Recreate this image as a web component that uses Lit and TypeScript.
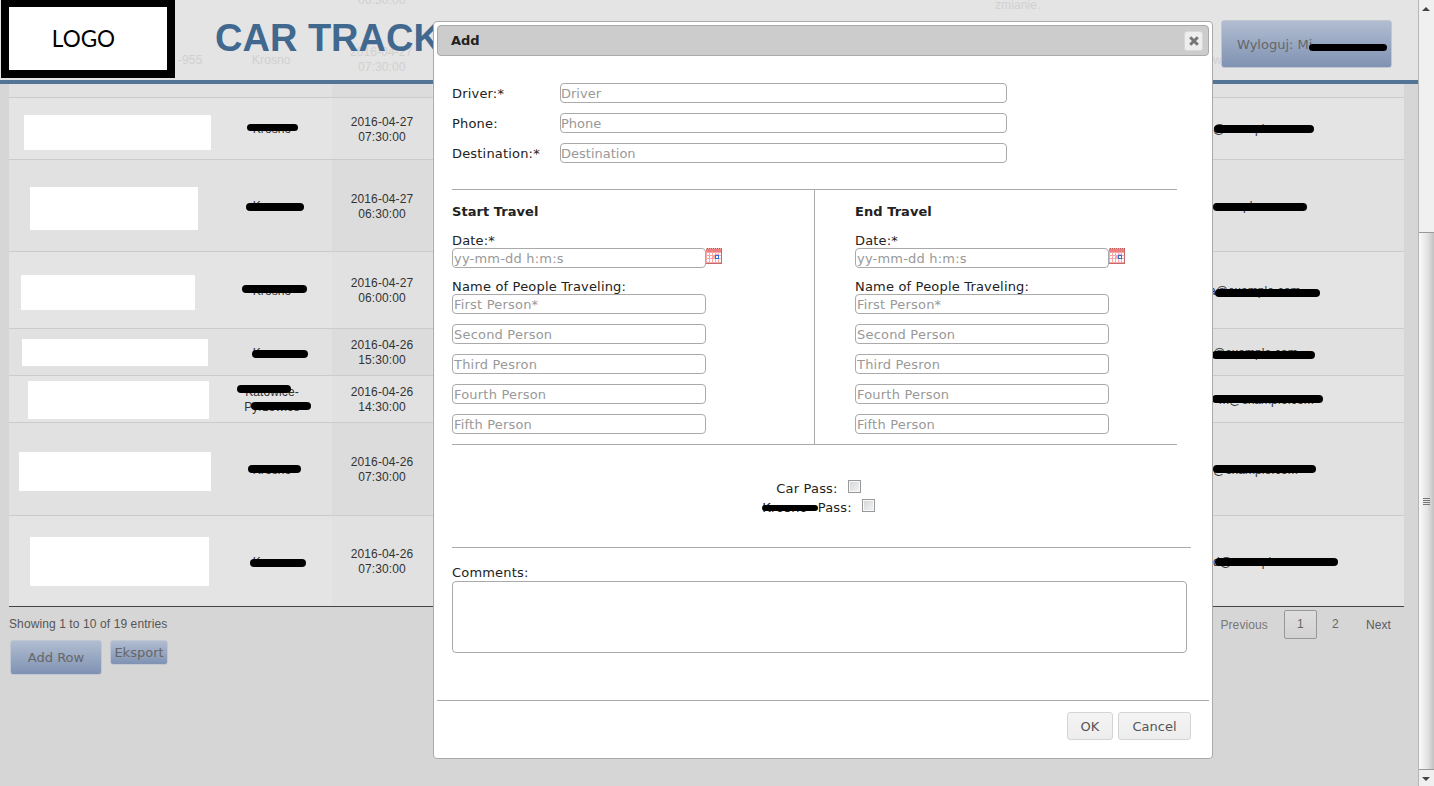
import { LitElement, css, html, nothing, svg } from "lit";
import { customElement } from "lit/decorators.js";

type Box = [x: number, y: number, w: number, h: number];

type TableRow = {
  height: number;
  date?: string;
  time?: string;
  city?: string[];
  email?: string;
  emailOffset?: number;
  white?: Box;
  marks?: Box[];
};

// boxes and marks are in page coordinates, the render turns them into row offsets
const ROWS: TableRow[] = [
  { height: 14 },
  {
    height: 62, date: "2016-04-27", time: "07:30:00", city: ["Krosno"], email: "@example.com", emailOffset: 0,
    white: [24, 115, 187, 35],
    marks: [[247, 124, 51, 7], [1214, 125, 100, 8]],
  },
  {
    height: 92, date: "2016-04-27", time: "06:30:00", city: ["Krosno"], email: "@example.com", emailOffset: -12,
    white: [30, 187, 168, 43],
    marks: [[246, 203, 58, 8], [1213, 203, 94, 8]],
  },
  {
    height: 77, date: "2016-04-27", time: "06:00:00", city: ["Krosno"], email: "a@example.com", emailOffset: -4,
    white: [21, 275, 174, 35],
    marks: [[242, 285, 65, 8], [1215, 289, 105, 8]],
  },
  {
    height: 47, date: "2016-04-26", time: "15:30:00", city: ["Krosno"], email: "@example.com", emailOffset: 0,
    white: [22, 339, 186, 27],
    marks: [[252, 350, 56, 8], [1212, 351, 103, 8]],
  },
  {
    height: 47, date: "2016-04-26", time: "14:30:00", city: ["Katowice-", "Pyrzowice"], email: "m@example.com", emailOffset: 6,
    white: [28, 381, 181, 38],
    marks: [[237, 385, 54, 8], [251, 402, 60, 8], [1212, 395, 111, 8]],
  },
  {
    height: 93, date: "2016-04-26", time: "07:30:00", city: ["Krosno"], email: "@example.com", emailOffset: 0,
    white: [19, 452, 192, 39],
    marks: [[248, 465, 53, 8], [1213, 465, 103, 8]],
  },
  {
    height: 91, date: "2016-04-26", time: "07:30:00", city: ["Krosno"], email: "d@example.com", emailOffset: 0,
    white: [30, 537, 179, 49],
    marks: [[250, 559, 56, 8], [1215, 558, 123, 8]],
  },
];

const GHOSTS: Array<[text: string, x: number, y: number]> = [
  ["06:30:00", 358, -7],
  ["-955", 178, 53],
  ["Krosno", 252, 53],
  ["2016-04-27", 350, 45],
  ["07:30:00", 358, 60],
  ["zmianie.", 995, -2],
  ["w", 1213, 53],
];

const PEOPLE = ["First Person*", "Second Person", "Third Pesron", "Fourth Person", "Fifth Person"];

const calendarIcon = svg`
  <svg class="cal" width="16" height="16" viewBox="0 0 16 16" shape-rendering="crispEdges">
    <rect x="0" y="0" width="16" height="1" fill="#e8b4b4" />
    <path d="M1 0h1v1H1zM3 0h1v1H3zM5 0h1v1H5zM7 0h1v1H7zM9 0h1v1H9zM11 0h1v1h-1zM13 0h1v1h-1zM15 0h1v1h-1z" fill="#b05a5a" />
    <rect x="0" y="1" width="16" height="3" fill="#ee7f7f" />
    <rect x="0" y="4" width="16" height="11" fill="#f7a8a8" />
    <rect x="0" y="15" width="16" height="1" fill="#c46a6a" />
    <rect x="15" y="1" width="1" height="15" fill="#c46a6a" />
    <path d="M1 5h2v2H1zM4 5h2v2H4zM7 5h2v2H7zM10 5h2v1h-2zM13 5h2v2h-2zM1 8h2v2H1zM4 8h2v2H4zM1 11h2v3H1zM4 11h2v3H4zM7 11h2v3H7zM10 11h2v3h-2zM13 11h2v3h-2zM13 8h2v2h-2z" fill="#fff" />
    <rect x="9" y="7" width="4" height="4" fill="#2f6fe0" />
    <rect x="10" y="8" width="2" height="2" fill="#fff" />
  </svg>
`;

@customElement("app-root")
export class AppRoot extends LitElement {
  private _renderRow(row: TableRow, top: number, index: number) {
    return html`
      <div class="row ${index % 2 === 0 ? "even" : "odd"}" style="height:${row.height}px">
        <div></div>
        <div class="cell">${row.city?.map((line) => html`<div>${line}</div>`) ?? nothing}</div>
        <div class="cell sorted">
          ${row.date ? html`<div>${row.date}</div><div>${row.time}</div>` : nothing}
        </div>
        <div></div>
        <div class="cell email">
          ${row.email ? html`<span style="margin-left:${row.emailOffset}px">${row.email}</span>` : nothing}
        </div>
        ${row.white ? this._renderBox("white-box", row.white, top) : nothing}
        ${row.marks?.map((mark) => this._renderBox("mark", mark, top)) ?? nothing}
      </div>
    `;
  }

  private _renderBox(cls: string, [x, y, w, h]: Box, top: number) {
    return html`<div class=${cls} style="left:${x - 9}px;top:${y - top}px;width:${w}px;height:${h}px"></div>`;
  }

  private _renderTravel(title: string) {
    return html`
      <div class="travel">
        <div class="travel-title">${title}</div>
        <div class="label">Date:*</div>
        <div class="date-row">
          <input class="text short" placeholder="yy-mm-dd h:m:s" />
          ${calendarIcon}
        </div>
        <div class="label people">Name of People Traveling:</div>
        <div class="person-list">
          ${PEOPLE.map((p) => html`<input class="text short" placeholder=${p} />`)}
        </div>
      </div>
    `;
  }

  protected render() {
    let top = 84;
    return html`
      <div class="page">
        <header>
          ${GHOSTS.map(([text, x, y]) => html`<span class="ghost" style="left:${x}px;top:${y}px">${text}</span>`)}
          <div class="logo"><span>LOGO</span></div>
          <h1>CAR TRACKER</h1>
          <button class="blue logout">
            Wyloguj: Mi<span class="logout-mark"></span>
          </button>
        </header>
        <div class="table">
          ${ROWS.map((row, i) => {
            const el = this._renderRow(row, top, i);
            top += row.height;
            return el;
          })}
        </div>
        <div class="below">
          <div>
            <div class="info">Showing 1 to 10 of 19 entries</div>
            <div class="actions">
              <button class="blue add">Add Row</button>
              <button class="blue export">Eksport</button>
            </div>
          </div>
          <div class="paging">
            <span class="prev">Previous</span>
            <span class="page-no current">1</span>
            <span class="page-no">2</span>
            <span class="next">Next</span>
          </div>
        </div>
      </div>

      <div class="scrollbar">
        <svg class="arrow" width="16" height="17" viewBox="0 0 16 17"><path d="M4 11l4-4 4 4z" fill="#444" /></svg>
        <div class="track">
          <div class="thumb">
            <svg width="8" height="8" viewBox="0 0 8 8" shape-rendering="crispEdges">
              <path d="M0 1h7M0 3h7M0 5h7M0 7h7" stroke="#777" stroke-width="1" />
            </svg>
          </div>
        </div>
        <svg class="arrow" width="16" height="16" viewBox="0 0 16 16"><path d="M4 7l4 4 4-4z" fill="#444" /></svg>
      </div>

      <div class="dialog">
        <div class="titlebar">
          <span>Add</span>
          <button class="close">
            <svg width="12" height="12" viewBox="0 0 12 12">
              <path d="M2.2 2.2l7.6 7.6M9.8 2.2l-7.6 7.6" stroke="#777" stroke-width="3" fill="none" />
            </svg>
          </button>
        </div>
        <div class="body">
          <div class="fields">
            <div class="label">Driver:*</div><input class="text" placeholder="Driver" />
            <div class="label">Phone:</div><input class="text" placeholder="Phone" />
            <div class="label">Destination:*</div><input class="text" placeholder="Destination" />
          </div>
          <div class="travels">
            ${this._renderTravel("Start Travel")}
            ${this._renderTravel("End Travel")}
          </div>
          <div class="passes">
            <label>Car Pass: <input type="checkbox" /></label>
            <label><span class="pass-name">Krosno<span class="pass-mark"></span></span> Pass: <input type="checkbox" /></label>
          </div>
          <div class="comments">
            <div class="label">Comments:</div>
            <textarea></textarea>
          </div>
        </div>
        <div class="footer">
          <button class="plain ok">OK</button>
          <button class="plain cancel">Cancel</button>
        </div>
      </div>
    `;
  }

  static styles = css`
    :host {
      display: flex;
      position: relative;
      width: 1434px;
      height: 786px;
      overflow: hidden;
      background: #d6d6d6;
      font-family: "Liberation Sans", Arial, sans-serif;
      font-size: 12px;
      letter-spacing: 0.1px;
      color: #333;
    }

    .page {
      width: 1418px;
      flex: none;
    }

    header {
      position: relative;
      display: flex;
      align-items: flex-start;
      height: 80px;
      background: #e4e4e4;
      border-bottom: 4px solid #527596;
      overflow: hidden;
    }

    .ghost {
      position: absolute;
      line-height: 15px;
      color: #d0d0d0;
    }

    .logo {
      position: relative;
      box-sizing: border-box;
      display: flex;
      align-items: center;
      justify-content: center;
      width: 174px;
      height: 78px;
      margin-left: 1px;
      padding-right: 9px;
      border: solid #000;
      border-width: 7px 8px 8px 8px;
      background: #fff;
      font-family: Lato, sans-serif;
      font-size: 22.5px;
      letter-spacing: 0;
      color: #000;
    }

    h1 {
      position: relative;
      margin: 16px 0 0 40px;
      font-size: 38px;
      line-height: 44px;
      font-weight: bold;
      letter-spacing: 0;
      color: #41688f;
      white-space: nowrap;
    }

    button {
      font-family: "DejaVu Sans", Verdana, sans-serif;
      font-size: 13px;
      padding: 0;
      cursor: pointer;
    }

    .blue {
      box-sizing: border-box;
      border: 1px solid #c0c7d2;
      border-radius: 3px;
      background: linear-gradient(#b1bdd1, #7f92b3);
      color: #666;
      position: relative;
    }

    .logout {
      position: absolute;
      left: 1221px;
      top: 20px;
      width: 171px;
      height: 48px;
      padding-left: 15px;
      text-align: left;
      white-space: nowrap;
    }

    .logout-mark {
      position: absolute;
      left: 87px;
      top: 23px;
      width: 78px;
      height: 7px;
      border-radius: 4px;
      background: #000;
    }

    .table {
      margin: 0 14px 0 9px;
    }

    .row {
      position: relative;
      box-sizing: border-box;
      display: grid;
      grid-template-columns: 203px 120px 100px 1fr 191px;
      border-bottom: 1px solid #cbcbcb;
      overflow: visible;
    }

    .row:last-child {
      border-bottom-color: #444;
    }

    .row.even {
      background: #e1e1e1;
    }

    .row.odd {
      background: #e4e4e4;
    }

    .cell {
      box-sizing: border-box;
      display: flex;
      flex-direction: column;
      align-items: center;
      justify-content: center;
      padding-top: 2px;
      line-height: 15px;
      text-align: center;
      color: #333;
    }

    .row.even .sorted {
      background: #dcdcdc;
    }

    .row.odd .sorted {
      background: #e1e1e1;
    }

    .email {
      align-items: flex-start;
      white-space: nowrap;
    }

    .white-box,
    .mark {
      position: absolute;
    }

    .white-box {
      background: #fff;
    }

    .mark {
      background: #000;
      border-radius: 4px;
    }

    .below {
      display: flex;
      justify-content: space-between;
      margin: 0 14px 0 9px;
    }

    .info {
      margin-top: 10px;
      line-height: 15px;
      color: #555;
    }

    .actions {
      display: flex;
      align-items: flex-start;
      gap: 8px;
      margin-top: 8px;
    }

    .add {
      width: 92px;
      height: 35px;
      margin-left: 1px;
    }

    .export {
      width: 58px;
      height: 25px;
    }

    .paging {
      display: flex;
      align-items: center;
      height: 29px;
      margin: 3px 13px 0 0;
      color: #666;
    }

    .prev {
      color: #777;
      margin-right: 16px;
    }

    .page-no {
      box-sizing: border-box;
      width: 33px;
      height: 29px;
      line-height: 27px;
      text-align: center;
      border: 1px solid transparent;
    }

    .page-no.current {
      border-color: #979797;
      border-radius: 2px;
      background: linear-gradient(#dedede, #d2d2d2);
      margin-right: 2px;
    }

    .next {
      margin-left: 14px;
      color: #5c5c66;
    }

    .scrollbar {
      display: flex;
      flex-direction: column;
      width: 16px;
      flex: none;
      background: #f0f0f0;
      border-left: 1px solid #b5b5b5;
      box-sizing: border-box;
    }

    .arrow {
      flex: none;
      margin-left: -1px;
    }

    .track {
      flex: 1;
      padding-top: 215px;
      box-sizing: border-box;
      height: 753px;
    }

    .thumb {
      display: flex;
      align-items: center;
      justify-content: center;
      height: 538px;
      box-sizing: border-box;
      background: linear-gradient(90deg, #fafafa 0%, #e4e4e4 55%, #c2c2c2 100%);
      border-bottom: 1px solid #999;
      border-top: 1px solid #999;
    }

    .dialog {
      position: absolute;
      left: 433px;
      top: 21px;
      box-sizing: border-box;
      width: 780px;
      height: 738px;
      padding: 3px;
      background: #fff;
      border: 1px solid #aaa;
      border-radius: 4px;
      font-family: "DejaVu Sans", Verdana, sans-serif;
      font-size: 13px;
      letter-spacing: 0;
      color: #222;
      display: flex;
      flex-direction: column;
    }

    .titlebar {
      box-sizing: border-box;
      display: flex;
      align-items: center;
      justify-content: space-between;
      height: 31px;
      padding: 0 5px 0 13px;
      background: #ccc;
      border: 1px solid #aaa;
      border-radius: 4px;
      font-weight: bold;
      color: #222;
    }

    .close {
      display: flex;
      align-items: center;
      justify-content: center;
      width: 19px;
      height: 20px;
      background: #eee;
      border: 1px solid #d8d8d8;
      border-radius: 3px;
    }

    .body {
      flex: 1;
      padding: 27px 0 0 15px;
    }

    .label {
      line-height: 16px;
      padding-top: 2px;
      margin: -1px 0;
      letter-spacing: 0.18px;
    }

    .fields {
      display: grid;
      grid-template-columns: 108px 447px;
      row-gap: 10px;
      align-items: center;
    }

    input.text {
      box-sizing: border-box;
      height: 20px;
      width: 100%;
      margin: 0;
      padding: 0;
      border: 1px solid #aaa;
      border-radius: 4px;
      font: inherit;
      background: #fff;
      outline: none;
    }

    input.text.short {
      width: 254px;
      padding: 0 1px;
      letter-spacing: 0.2px;
    }

    input.text::placeholder {
      color: #999;
      opacity: 1;
    }

    .travels {
      display: grid;
      grid-template-columns: 363px 362px;
      width: 725px;
      height: 256px;
      margin-top: 26px;
      border-top: 1px solid #aaa;
      border-bottom: 1px solid #aaa;
      box-sizing: border-box;
    }

    .travel {
      padding-top: 14px;
    }

    .travel:first-child {
      border-right: 1px solid #aaa;
    }

    .travel:last-child {
      padding-left: 40px;
    }

    .travel-title {
      font-weight: bold;
      line-height: 16px;
      margin-bottom: 12px;
      letter-spacing: 0.05px;
    }

    .date-row {
      display: flex;
      align-items: flex-start;
    }

    .cal {
      flex: none;
    }

    .label.people {
      margin-top: 9px;
    }

    .person-list {
      display: flex;
      flex-direction: column;
      gap: 10px;
    }

    .passes {
      display: flex;
      flex-direction: column;
      align-items: center;
      width: 733px;
      height: 68px;
      padding: 34px 6px 0 0;
      border-bottom: 1px solid #aaa;
      line-height: 19px;
      letter-spacing: 0.18px;
    }

    .passes label {
      display: flex;
      align-items: center;
      gap: 10px;
    }

    .passes input {
      appearance: none;
      box-sizing: border-box;
      width: 13px;
      height: 13px;
      margin: -4px 0 0;
      border: 1px solid #999;
      background: linear-gradient(135deg, #d2d5da, #f4f4f4);
      box-shadow: inset 0 0 0 1px #f8f8f8;
    }

    .pass-name {
      position: relative;
    }

    .pass-mark {
      position: absolute;
      left: 0;
      top: 7px;
      width: 56px;
      height: 6px;
      border-radius: 3px;
      background: #000;
    }

    .comments {
      padding-top: 16px;
    }

    textarea {
      display: block;
      box-sizing: border-box;
      width: 735px;
      height: 72px;
      margin-top: 1px;
      border: 1px solid #aaa;
      border-radius: 4px;
      resize: none;
      outline: none;
    }

    .footer {
      box-sizing: border-box;
      display: flex;
      justify-content: flex-end;
      gap: 5px;
      height: 55px;
      padding: 11px 18px 0 0;
      border-top: 1px solid #aaa;
    }

    .plain {
      box-sizing: border-box;
      height: 28px;
      border: 1px solid #d4d4d4;
      border-radius: 3px;
      background: linear-gradient(#f4f4f4, #ededed);
      color: #555;
    }

    .ok {
      width: 46px;
    }

    .cancel {
      width: 73px;
    }
  `;
}

declare global {
  interface HTMLElementTagNameMap {
    "app-root": AppRoot;
  }
}
